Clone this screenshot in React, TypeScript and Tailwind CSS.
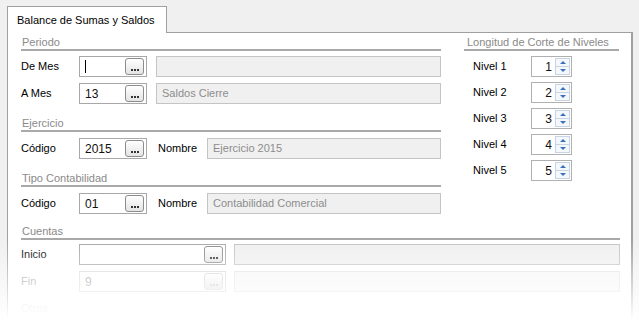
import React from 'react';

const font = { fontFamily: '"Liberation Sans", Arial, sans-serif' };

function Dots({ faded = false }: { faded?: boolean }) {
  return (
    <span
      className={`flex h-[17px] w-[19px] items-end justify-center rounded-[3px] border bg-gradient-to-b from-white to-[#e4e4e4] pb-[3px] ${
        faded ? 'border-[#d4d4d4] text-[#c8c8c8]' : 'border-[#8c8c8c] text-[#333]'
      }`}
    >
      <span className="flex gap-[1px]">
        <span className="h-[2px] w-[2px] bg-current" />
        <span className="h-[2px] w-[2px] bg-current" />
        <span className="h-[2px] w-[2px] bg-current" />
      </span>
    </span>
  );
}

function CodeInput({ value, width = 'w-[68px]', caret = false, faded = false }: { value?: string; width?: string; caret?: boolean; faded?: boolean }) {
  return (
    <div
      className={`flex h-[21px] ${width} items-center justify-between border bg-white pl-[5px] pr-[2px] ${
        faded ? 'border-[#d8d8d8] text-[#9a9a9a]' : 'border-[#a8a8a8] text-[#111]'
      }`}
    >
      <span className="flex items-center text-[12px] leading-none">
        {caret && <span className="h-[13px] w-[1px] bg-black" />}
        {value}
      </span>
      <Dots faded={faded} />
    </div>
  );
}

function DescField({ value, width, faded = false }: { value?: string; width: string; faded?: boolean }) {
  return (
    <div
      className={`flex h-[21px] ${width} items-center border px-[5px] text-[11px] ${
        faded ? 'border-[#e2e2e2] bg-[#f7f7f7] text-[#aaa]' : 'border-[#c4c4c4] bg-[#f0f0f0] text-[#8d8d8d]'
      }`}
    >
      {value}
    </div>
  );
}

function Header({ title, width }: { title: string; width: string }) {
  return (
    <div className={`${width} whitespace-nowrap border-b-2 border-[#a9a9a9] pl-[1px] text-[11px] leading-[14px] text-[#8a8a8a]`}>{title}</div>
  );
}

function Label({ children, faded = false }: { children: React.ReactNode; faded?: boolean }) {
  return <span className={`w-[58px] whitespace-nowrap text-[11px] ${faded ? 'text-[#9a9a9a]' : 'text-[#000]'}`}>{children}</span>;
}

function Spinner({ value }: { value: number }) {
  return (
    <div className="flex h-[21px] w-[41px] items-center border border-[#b0b0b0] bg-white">
      <span className="flex-1 pr-[3px] text-right text-[12px] text-[#111]">{value}</span>
      <div className="mr-[1px] flex h-[17px] w-[15px] flex-col border border-[#c8d4e2] bg-[#f4f7fb]">
        <span className="flex flex-1 items-center justify-center border-b border-[#c8d4e2]">
          <span className="h-0 w-0 border-x-[3px] border-b-[3px] border-x-transparent border-b-[#3a6fc0]" />
        </span>
        <span className="flex flex-1 items-center justify-center">
          <span className="h-0 w-0 border-x-[3px] border-t-[3px] border-x-transparent border-t-[#3a6fc0]" />
        </span>
      </div>
    </div>
  );
}

export default function App() {
  return (
    <div className="relative h-[320px] w-[639px] overflow-hidden bg-[#f0f0f0]" style={font}>
      <div className="pl-[7px] pt-[6px]">
        <div className="relative z-10 flex h-[27px] w-[160px] items-center whitespace-nowrap border border-b-0 border-[#a0a0a0] bg-white pl-[9px] text-[11px] text-[#000]">
          Balance de Sumas y Saldos
        </div>
      </div>
      <div className="-mt-px ml-[7px] h-[320px] w-[626px] border border-r-2 border-[#a0a0a0] bg-white pl-[13px] pt-[2px]">
        <div className="flex">
          <div className="w-[420px]">
            <Header title="Periodo" width="w-[420px]" />
            <div className="mt-[5px] flex items-center">
              <Label>De Mes</Label>
              <CodeInput caret />
              <span className="w-[9px]" />
              <DescField width="w-[285px]" />
            </div>
            <div className="mt-[6px] flex items-center">
              <Label>A Mes</Label>
              <CodeInput value="13" />
              <span className="w-[9px]" />
              <DescField value="Saldos Cierre" width="w-[285px]" />
            </div>
            <div className="mt-[12px]">
              <Header title="Ejercicio" width="w-[420px]" />
            </div>
            <div className="mt-[6px] flex items-center">
              <Label>Código</Label>
              <CodeInput value="2015" />
              <span className="w-[60px] pl-[11px] text-[11px] text-[#000]">Nombre</span>
              <DescField value="Ejercicio 2015" width="w-[234px]" />
            </div>
            <div className="mt-[12px]">
              <Header title="Tipo Contabilidad" width="w-[420px]" />
            </div>
            <div className="mt-[6px] flex items-center">
              <Label>Código</Label>
              <CodeInput value="01" />
              <span className="w-[60px] pl-[11px] text-[11px] text-[#000]">Nombre</span>
              <DescField value="Contabilidad Comercial" width="w-[234px]" />
            </div>
          </div>
          <div className="ml-[23px] w-[155px]">
            <div className="w-[155px] whitespace-nowrap border-b-2 border-[#a9a9a9] pl-[3px] text-[11px] leading-[14px] text-[#8a8a8a]">
              Longitud de Corte de Niveles
            </div>
            <div className="mt-[5px] flex flex-col gap-[5px] pl-[9px]">
              {[1, 2, 3, 4, 5].map(n => (
                <div key={n} className="flex items-center">
                  <Label>Nivel {n}</Label>
                  <Spinner value={n} />
                </div>
              ))}
            </div>
          </div>
        </div>
        <div className="mt-[10px]">
          <Header title="Cuentas" width="w-[599px]" />
        </div>
        <div className="mt-[4px] flex items-center">
          <Label>Inicio</Label>
          <CodeInput width="w-[147px]" />
          <span className="w-[8px]" />
          <DescField width="w-[386px]" />
        </div>
        <div className="mt-[6px] flex items-center">
          <Label faded>Fin</Label>
          <CodeInput value="9" width="w-[147px]" faded />
          <span className="w-[8px]" />
          <DescField width="w-[386px]" faded />
        </div>
        <div className="mt-[8px] text-[11px] text-[#ccc]">Otros</div>
      </div>
      <div className="pointer-events-none absolute inset-x-0 bottom-0 h-[80px] bg-gradient-to-b from-white/0 via-white/50 to-white" />
    </div>
  );
}
